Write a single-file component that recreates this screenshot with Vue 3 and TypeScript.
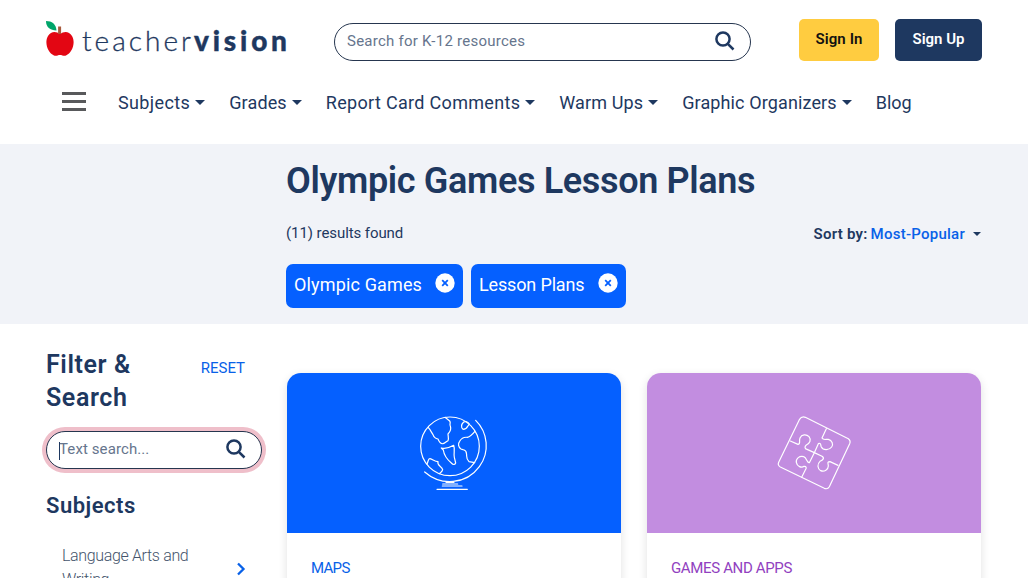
<script setup lang="ts">
import { onMounted, ref } from "vue"

interface NavItem {
  label: string
  key: string
  menu: boolean
}

interface Tag {
  label: string
  key: string
}

const navItems: NavItem[] = [
  { label: "Subjects", key: "subjects", menu: true },
  { label: "Grades", key: "grades", menu: true },
  { label: "Report Card Comments", key: "comments", menu: true },
  { label: "Warm Ups", key: "warmups", menu: true },
  { label: "Graphic Organizers", key: "organizers", menu: true },
  { label: "Blog", key: "blog", menu: false },
]

const tags = ref<Tag[]>([
  { label: "Olympic Games", key: "olympic" },
  { label: "Lesson Plans", key: "lesson" },
])

const query = ref("")
const filterText = ref("")
const filterInput = ref<HTMLInputElement | null>(null)

function removeTag(key: string) {
  tags.value = tags.value.filter((tag) => tag.key !== key)
}

function reset() {
  tags.value = []
  filterText.value = ""
}

onMounted(() => filterInput.value?.focus())
</script>

<template>
  <div class="page">
    <header class="header">
      <div class="top-row">
        <a class="logo" aria-label="teachervision">
          <svg width="244" height="40" viewBox="0 0 244 40">
            <path
              d="M14 14C10 11 5 11 2 16C-2 23 2 33 8 35.500C10 36.300 12 35 14 35C16 35 18 36.300 20 35.500C26 33 30 23 26 16C23 11 18 11 14 14Z"
              fill="#e30613"
            />
            <path d="M13.600 14V6.500" stroke="#a85a3c" stroke-width="3" />
            <path d="M0 1C6 1 10 4 10.500 10.500C4 10.500 0 7 0 1Z" fill="#00a56a" />
            <text class="logo-light" x="36" y="30.500" textLength="109">teacher</text>
            <text class="logo-bold" x="148" y="30.500" textLength="93">vision</text>
          </svg>
        </a>
        <form class="search" @submit.prevent>
          <input v-model="query" class="main-input" placeholder="Search for K-12 resources" />
          <button type="submit" class="search-button" aria-label="Search">
            <svg width="20" height="20" viewBox="0 0 20 20">
              <circle cx="8" cy="8" r="6.600" />
              <path d="M12.800 12.800L18.500 18.500" />
            </svg>
          </button>
        </form>
        <button type="button" class="account sign-in">Sign In</button>
        <button type="button" class="account sign-up">Sign Up</button>
      </div>
      <nav class="nav">
        <button type="button" class="burger" aria-label="Menu">
          <span></span>
          <span></span>
          <span></span>
        </button>
        <a v-for="item in navItems" :key="item.key" class="nav-link" :class="item.key">
          <span>{{ item.label }}</span>
          <i v-if="item.menu" class="caret"></i>
        </a>
      </nav>
    </header>

    <section class="banner">
      <h1>Olympic Games Lesson Plans</h1>
      <div class="result-row">
        <span class="count">(11) results found</span>
        <span class="sort">
          <b class="sort-label">Sort by:</b>
          <a>Most-Popular</a>
          <i class="caret small"></i>
        </span>
      </div>
      <div class="tags">
        <span v-for="tag in tags" :key="tag.key" class="tag" :class="tag.key">
          <span>{{ tag.label }}</span>
          <button type="button" aria-label="Remove" @click="removeTag(tag.key)">
            <svg width="20" height="20" viewBox="0 0 20 20">
              <circle cx="10" cy="10" r="9.700" fill="#fff" />
              <path d="M7.200 7.200L12.800 12.800M12.800 7.200L7.200 12.800" />
            </svg>
          </button>
        </span>
      </div>
    </section>

    <main class="content">
      <aside class="sidebar">
        <div class="filter-head">
          <h2>Filter &amp;<br />Search</h2>
          <button type="button" class="reset" @click="reset">RESET</button>
        </div>
        <form class="search focused" @submit.prevent>
          <i v-if="!filterText" class="text-cursor"></i>
          <input ref="filterInput" v-model="filterText" placeholder="Text search..." />
          <button type="submit" class="search-button" aria-label="Search">
            <svg width="20" height="20" viewBox="0 0 20 20">
              <circle cx="8" cy="8" r="6.600" />
              <path d="M12.800 12.800L18.500 18.500" />
            </svg>
          </button>
        </form>
        <h3>Subjects</h3>
        <div class="subject">
          <span>Language Arts and<br />Writing</span>
          <svg width="10" height="14" viewBox="0 0 10 14">
            <path d="M2 1.500L7.500 7L2 12.500" />
          </svg>
        </div>
      </aside>

      <article class="card maps">
        <div class="cover">
          <svg width="100" height="95" viewBox="0 0 300 285">
            <circle cx="135" cy="124" r="88" />
            <path d="M212 46C249 82 255 142 223 185C184 239 108 244 59 201" />
            <path d="M113 237H158M96 253H187" />
            <path d="M123 232H147" />
            <path d="M112 243H171" />
            <path
              d="M70 68C77 75 78 80 84 89C87 98 91 101 99 102C103 112 106 118 114 116C120 115 123 110 129 107C132 98 129 94 129 87C136 80 139 72 136 63C132 58 139 54 134 48L120 37"
            />
            <path d="M109 129C121 132 134 128 146 121C151 134 145 145 148 157L152 174C149 181 144 179 139 174C126 163 117 150 115 135Z" />
            <path d="M193 57C189 50 181 48 176 51C168 58 168 69 174 73C181 73 186 69 188 64Z" />
            <path
              d="M209 80C201 90 197 95 187 97C179 96 169 100 164 109C158 116 160 126 168 132C177 136 184 134 184 144C187 154 181 160 192 170L209 173"
            />
            <path d="M66 177C70 170 69 160 75 161C83 163 89 169 99 170C95 182 111 183 113 194C111 202 105 202 104 206" />
          </svg>
        </div>
        <div class="category">MAPS</div>
      </article>

      <article class="card games">
        <div class="cover">
          <svg width="100" height="95" viewBox="0 0 300 285">
            <path
              d="M121 37L250 101Q258 107 254 116L193 245Q188 254 178 250L46 186Q37 181 41 172L103 44Q110 33 121 37Z"
            />
            <path
              d="M184 71L171 99C175 107 183 102 190 103C201 106 206 118 200 126C192 137 174 136 169 126C166 119 169 113 160 116L148 143L133 173C125 174 126 158 116 155C104 151 92 161 94 172C96 185 110 189 117 184C124 183 125 189 122 193L110 217"
            />
            <path
              d="M76 108L99 118C108 117 101 109 105 99C110 88 124 87 132 95C140 105 134 116 124 120C118 125 119 131 126 133L148 143L171 154C180 160 173 165 165 169C156 177 157 191 167 197C178 202 190 193 190 183C190 175 185 171 195 170L219 181"
            />
          </svg>
        </div>
        <div class="category">GAMES AND APPS</div>
      </article>
    </main>
  </div>
</template>

<style>
body {
  margin: 0;
  overflow: hidden;
}
</style>

<style scoped>
.page {
  width: 1028px;
  height: 578px;
  overflow: hidden;
  background: #fff;
  color: #1e3860;
  font-family: Roboto, "Liberation Sans", sans-serif;
}

.page * {
  box-sizing: border-box;
}

button {
  border: 0;
  padding: 0;
  background: transparent;
  font-family: inherit;
  cursor: pointer;
}

svg {
  display: block;
  flex: none;
}

h1,
h2,
h3 {
  margin: 0;
  font-weight: 600;
}

.header {
  height: 144px;
  padding-top: 19px;
}

.top-row {
  display: flex;
  height: 42px;
  padding-left: 46px;
  align-items: center;
}

.logo {
  width: 288px;
  height: 40px;
}

.logo text {
  fill: #1e3860;
  stroke: #1e3860;
  font-family: Lato, sans-serif;
  font-size: 28px;
}

.logo .logo-light {
  font-weight: 300;
  stroke-width: 0.3;
}

.logo .logo-bold {
  font-weight: 900;
  stroke-width: 0.4;
}

.search {
  display: flex;
  align-items: center;
  width: 417px;
  height: 38px;
  margin-top: 4px;
  padding: 0 15px 2px 12px;
  border: 1px solid #26364f;
  border-radius: 19px;
  background: #fff;
}

.search input {
  flex: 1;
  min-width: 0;
  padding: 0;
  border: 0;
  outline: 0;
  background: transparent;
  color: #1e3860;
  caret-color: transparent;
  font: 15px Roboto, sans-serif;
  letter-spacing: 0.1px;
}

.search input::placeholder {
  color: #66758d;
  opacity: 1;
}

.search .main-input {
  caret-color: auto;
  letter-spacing: 0.25px;
}

.search-button svg {
  fill: none;
  stroke: #1e3860;
  stroke-width: 2.5;
}

.account {
  height: 42px;
  padding-bottom: 2px;
  border-radius: 5px;
  font-size: 15px;
  font-weight: 600;
}

.sign-in {
  width: 80px;
  margin-left: 48px;
  background: #ffcc40;
  color: #111;
  letter-spacing: 0.1px;
}

.sign-up {
  width: 87px;
  margin-left: 16px;
  background: #1e3860;
  color: #fff;
}

.nav {
  display: flex;
  height: 40px;
  margin-top: 21px;
  padding-left: 62px;
  align-items: center;
}

.burger {
  display: flex;
  flex-direction: column;
  gap: 5px;
  width: 24px;
  margin: -2px 32px 0 0;
}

.burger span {
  height: 3px;
  background: #58595b;
}

.nav-link {
  display: flex;
  align-items: center;
  margin-right: 24px;
  font-size: 18px;
  white-space: nowrap;
}

.nav-link.subjects {
  letter-spacing: 0.38px;
}

.nav-link.grades {
  letter-spacing: 0.12px;
}

.nav-link.comments {
  letter-spacing: 0.32px;
}

.nav-link.warmups {
  letter-spacing: 0.12px;
}

.nav-link.organizers {
  letter-spacing: 0.12px;
}

.caret {
  width: 0;
  height: 0;
  margin-left: 5px;
  border: 5px solid transparent;
  border-top-color: #1e3860;
  border-bottom: 0;
}

.caret.small {
  margin-left: 8px;
  border-width: 4px 4px 0;
}

.banner {
  height: 180px;
  padding: 13px 47px 0 286px;
  background: #f1f3f8;
}

h1 {
  font-size: 36px;
  letter-spacing: -0.35px;
  line-height: 48px;
  white-space: nowrap;
}

.result-row {
  display: flex;
  justify-content: space-between;
  align-items: center;
  height: 24px;
  margin-top: 16px;
  font-size: 15px;
}

.count {
  letter-spacing: -0.08px;
}

.sort {
  display: flex;
  align-items: center;
  padding-top: 2px;
  font-weight: 500;
  letter-spacing: 0.25px;
}

.sort-label {
  margin-right: 3px;
  font-weight: 600;
}

.sort a {
  color: #0861e8;
}

.tags {
  display: flex;
  gap: 8px;
  margin-top: 19px;
}

.tag {
  display: flex;
  justify-content: space-between;
  align-items: center;
  width: 177px;
  height: 44px;
  padding: 0 8px 3px;
  border-radius: 7px;
  background: #0560ff;
  color: #fff;
  font-size: 18px;
  letter-spacing: 0.15px;
}

.tag.lesson {
  width: 155px;
  letter-spacing: -0.15px;
}

.tag svg {
  margin-bottom: 4px;
  stroke: #0560ff;
  stroke-width: 1.8;
}

.tag circle {
  stroke: none;
}

.content {
  display: flex;
  align-items: flex-start;
  padding-left: 46px;
}

.sidebar {
  width: 216px;
  margin-right: 25px;
  padding-top: 24px;
}

.filter-head {
  display: flex;
  justify-content: space-between;
  align-items: flex-start;
  height: 83px;
  padding-right: 17px;
}

h2 {
  font-size: 25px;
  letter-spacing: 0.6px;
  line-height: 33px;
}

.reset {
  margin-top: 9px;
  color: #0861e8;
  font-size: 15px;
  line-height: 22px;
}

.focused {
  position: relative;
  width: 216px;
  margin: 0;
  box-shadow: 0 0 0 4px #efbfca;
}

.text-cursor {
  position: absolute;
  left: 12px;
  top: 10px;
  width: 1px;
  height: 18px;
  background: #1e3860;
}

h3 {
  margin-top: 22px;
  font-size: 22px;
  letter-spacing: 0.5px;
  line-height: 30px;
}

.subject {
  display: flex;
  justify-content: space-between;
  align-items: center;
  margin-top: 23px;
  padding: 0 16px;
  color: #44546c;
  font-size: 16px;
  font-weight: 300;
  letter-spacing: -0.35px;
  line-height: 24px;
}

.subject svg {
  margin-top: 2px;
  fill: none;
  stroke: #0861e8;
  stroke-width: 2.3;
}

.card {
  width: 334px;
  height: 260px;
  margin: 49px 26px 0 0;
  border-radius: 14px;
  overflow: hidden;
  box-shadow: 0 3px 10px rgba(0, 0, 0, 0.12);
}

.cover {
  display: flex;
  justify-content: center;
  height: 160px;
  padding: 32px 0 0 2px;
  background: #0560ff;
}

.games .cover {
  background: #c28de0;
}

.cover svg {
  fill: none;
  stroke: #fff;
  stroke-width: 3.6;
  stroke-linejoin: round;
  stroke-linecap: round;
}

.category {
  padding: 24px 24px 0;
  color: #0861e8;
  font-size: 15px;
  letter-spacing: -0.7px;
  line-height: 22px;
}

.games .category {
  color: #9141c0;
  letter-spacing: -0.35px;
}
</style>
